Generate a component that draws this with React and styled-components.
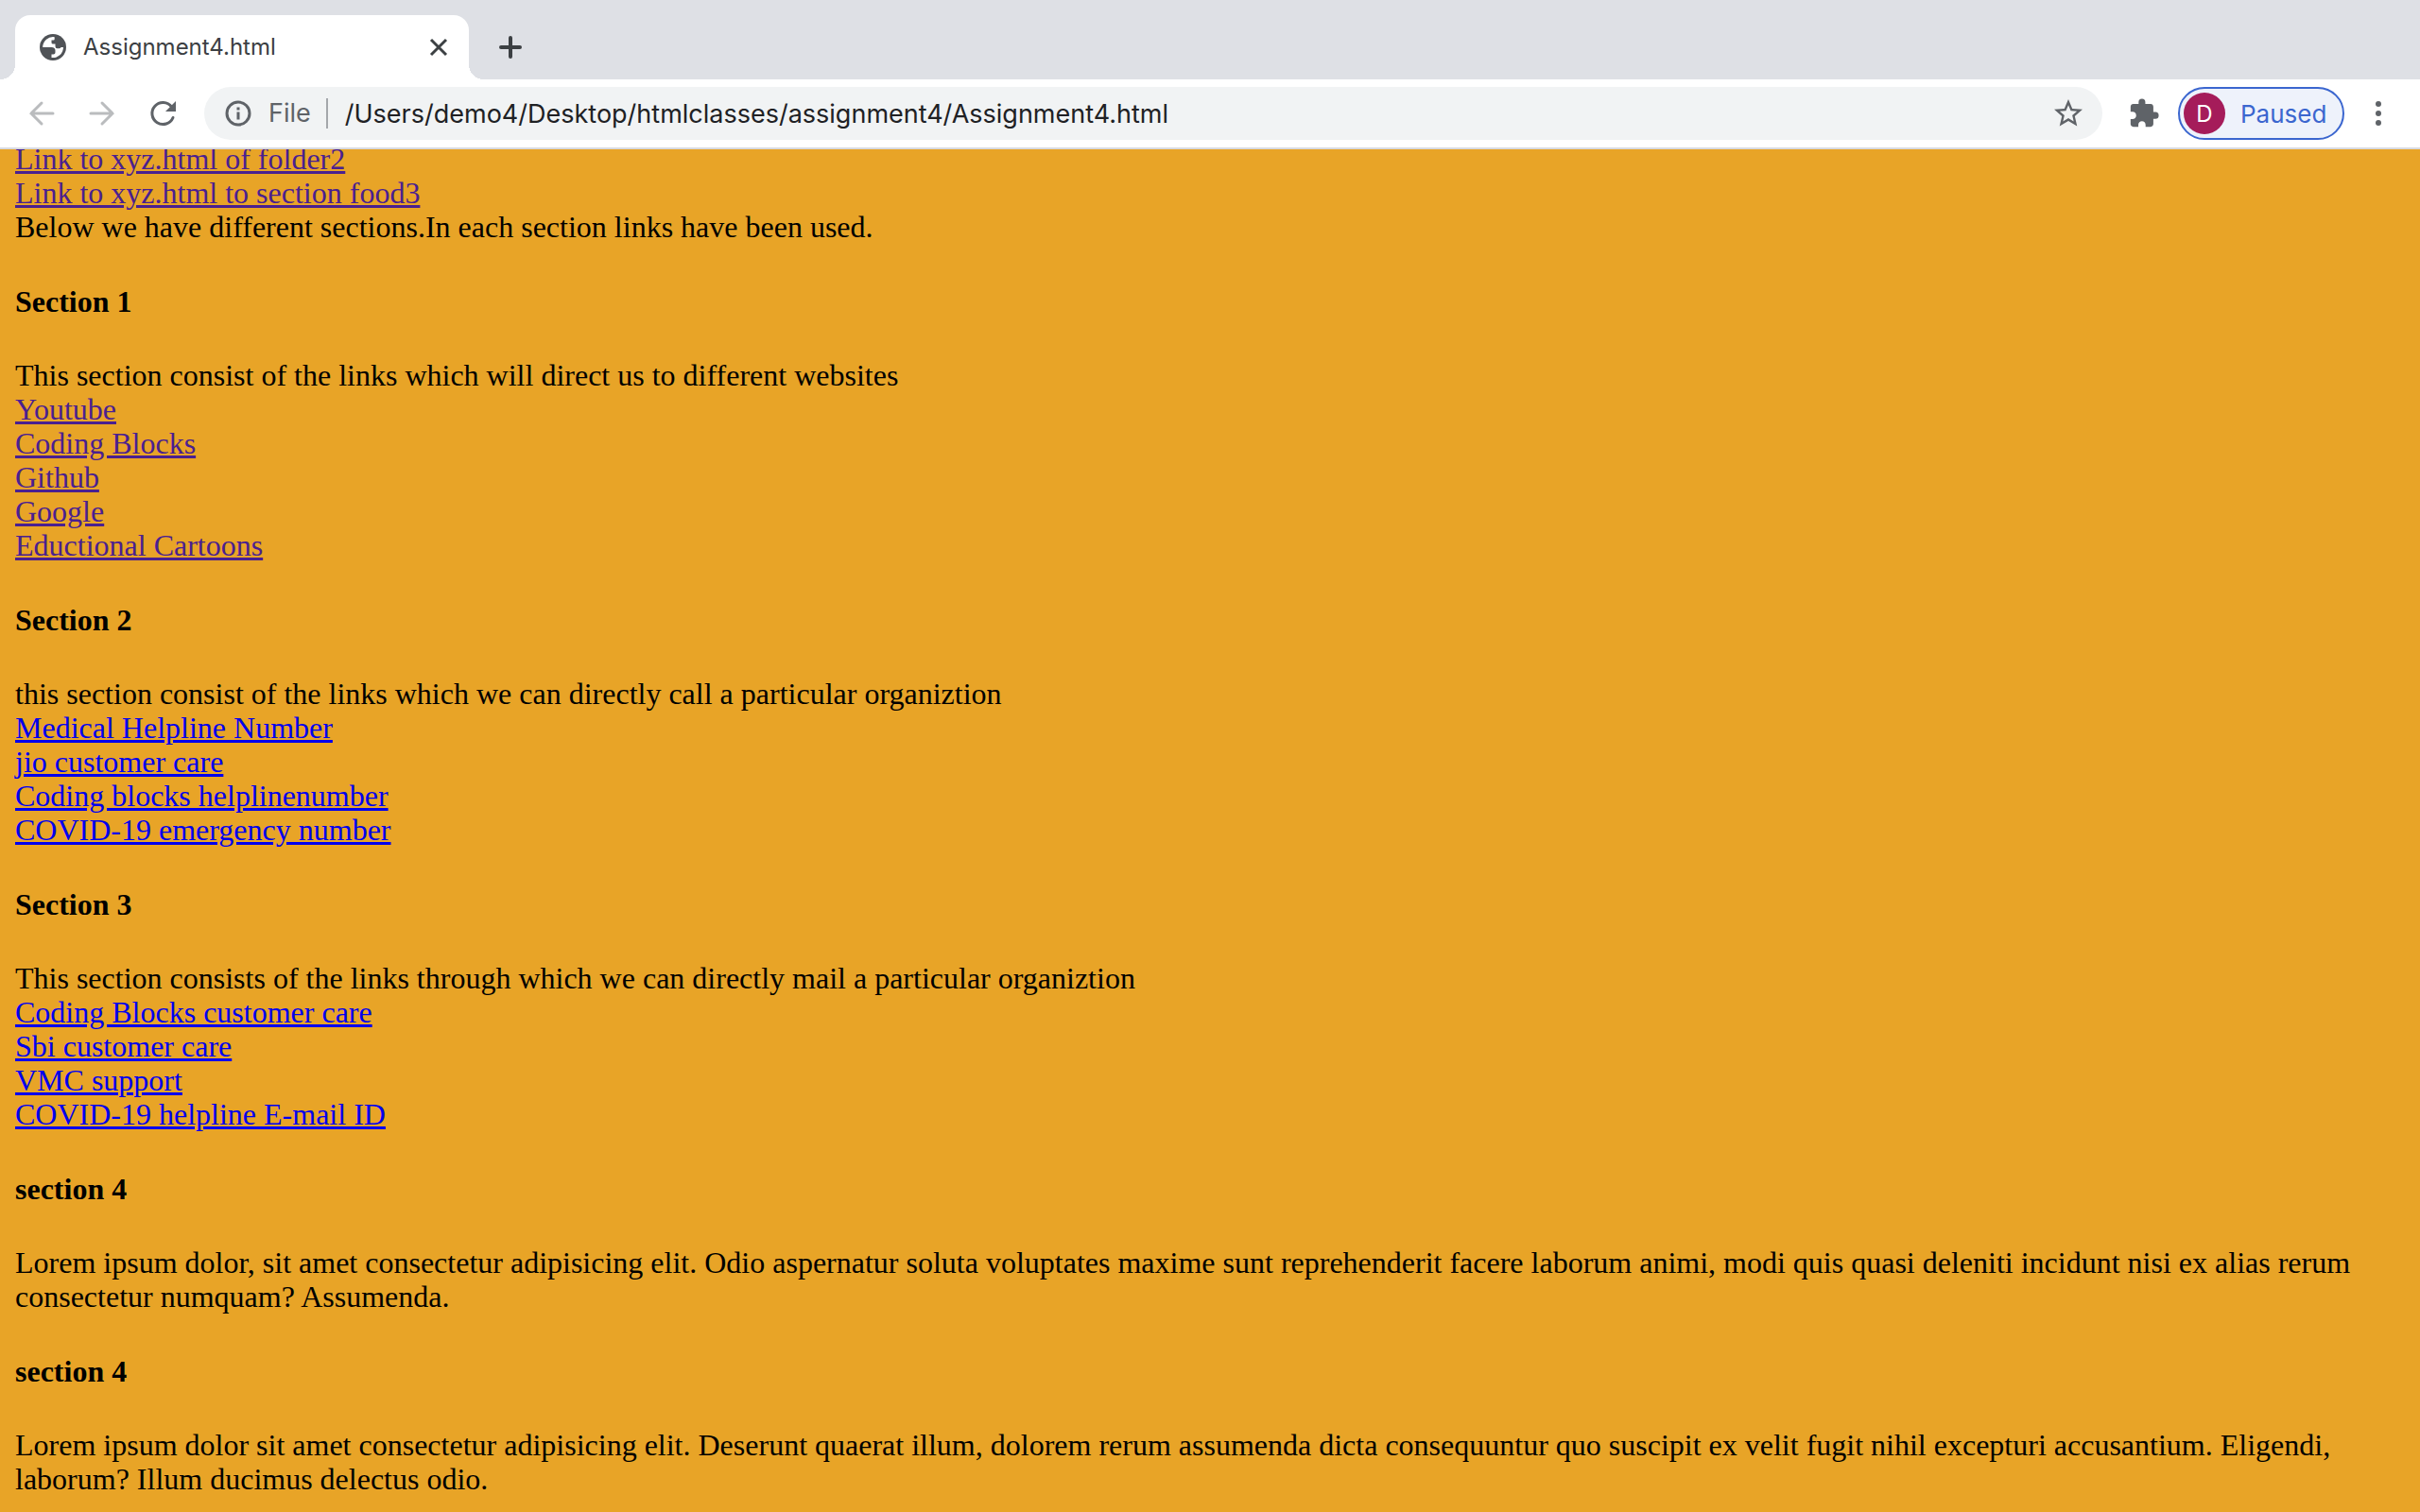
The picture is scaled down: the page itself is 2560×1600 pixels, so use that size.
import React from "react";
import styled, { createGlobalStyle } from "styled-components";
import { MdStarBorder, MdExtension } from "react-icons/md";

const GlobalStyle = createGlobalStyle`
  * { box-sizing: border-box; }
  body { margin: 0; }
`;

const Window = styled.div`
  display: flex;
  flex-direction: column;
  height: 100vh;
  overflow: hidden;
  font-family: Inter, Roboto, "Liberation Sans", sans-serif;
`;

const TabStrip = styled.header`
  display: flex;
  align-items: flex-end;
  gap: 10px;
  padding: 16px 16px 0;
  background: #dee0e5;
`;

const Tab = styled.div`
  position: relative;
  display: flex;
  align-items: center;
  width: 480px;
  height: 68px;
  padding: 0 20px 0 26px;
  border-radius: 16px 16px 0 0;
  background: #ffffff;
  color: #3c4043;

  &::before,
  &::after {
    content: "";
    position: absolute;
    bottom: 0;
    width: 16px;
    height: 16px;
  }
  &::before {
    right: 100%;
    background: radial-gradient(circle at 0 0, transparent 16px, #ffffff 16px);
  }
  &::after {
    left: 100%;
    background: radial-gradient(circle at 100% 0, transparent 16px, #ffffff 16px);
  }
`;

const TabTitle = styled.span`
  flex: 1;
  margin-left: 18px;
  font-size: 24px;
  line-height: 32px;
`;

const IconButton = styled.button`
  display: flex;
  align-items: center;
  justify-content: center;
  flex: none;
  width: ${(p) => p.$size || 64}px;
  height: ${(p) => p.$size || 64}px;
  padding: 0;
  border: 0;
  background: none;
  color: ${(p) => p.$color || "#5f6368"};
`;

const Toolbar = styled.nav`
  display: flex;
  align-items: center;
  height: 74px;
  padding: 0 8px 0 12px;
  border-bottom: 2px solid #d8dae0;
  background: #ffffff;
`;

const AddressBar = styled.div`
  display: flex;
  align-items: center;
  flex: 1;
  height: 56px;
  margin: 0 8px 0 12px;
  padding: 0 4px 0 20px;
  border-radius: 28px;
  background: #f1f3f4;
  color: #5f6368;
  font-size: 27px;
`;

const Scheme = styled.label`
  padding: 0 16px;
  border-right: 2px solid #a4a7ab;
  line-height: 32px;
`;

const Address = styled.input`
  flex: 1;
  min-width: 0;
  padding: 0 0 0 18px;
  border: 0;
  outline: 0;
  background: none;
  color: #202124;
  font: inherit;
`;

const Profile = styled.button`
  display: flex;
  align-items: center;
  gap: 16px;
  width: 176px;
  height: 56px;
  padding: 0 0 0 4px;
  border: 2px solid #3b66cf;
  border-radius: 28px;
  background: #eef2fb;
  color: #3b66cf;
  font-family: inherit;
  font-size: 26px;
`;

const Avatar = styled.span`
  display: flex;
  align-items: center;
  justify-content: center;
  width: 44px;
  height: 44px;
  border-radius: 50%;
  background: #a51c5a;
  color: #ffffff;
  font-size: 24px;
`;

const Viewport = styled.main`
  flex: 1;
  min-height: 0;
  overflow: hidden;
  background: #e8a427;
`;

const Document = styled.article`
  margin-top: -8px;
  padding: 0 16px;
  color: #000000;
  font-family: "Liberation Serif", "Times New Roman", serif;
  font-size: 32px;
  line-height: 36px;
`;

const Heading = styled.h4`
  margin: 43px 0 42px;
  font-size: 32px;
  line-height: 36px;
`;

const Text = styled.p`
  margin: 0;
`;

const Row = styled.div`
  height: 36px;
`;

const Link = styled.a`
  color: ${(p) => (p.$visited ? "#4a2090" : "#0000ee")};
  text-decoration: underline;
`;

const introLinks = ["Link to xyz.html of folder2", "Link to xyz.html to section food3"];

const sections = [
  {
    title: "Section 1",
    text: "This section consist of the links which will direct us to different websites",
    links: ["Youtube", "Coding Blocks", "Github", "Google", "Eductional Cartoons"],
    visited: true,
  },
  {
    title: "Section 2",
    text: "this section consist of the links which we can directly call a particular organiztion",
    links: ["Medical Helpline Number", "jio customer care", "Coding blocks helplinenumber", "COVID-19 emergency number"],
  },
  {
    title: "Section 3",
    text: "This section consists of the links through which we can directly mail a particular organiztion",
    links: ["Coding Blocks customer care", "Sbi customer care", "VMC support", "COVID-19 helpline E-mail ID"],
  },
  {
    title: "section 4",
    text: "Lorem ipsum dolor, sit amet consectetur adipisicing elit. Odio aspernatur soluta voluptates maxime sunt reprehenderit facere laborum animi, modi quis quasi deleniti incidunt nisi ex alias rerum consectetur numquam? Assumenda.",
    links: [],
  },
  {
    title: "section 4",
    text: "Lorem ipsum dolor sit amet consectetur adipisicing elit. Deserunt quaerat illum, dolorem rerum assumenda dicta consequuntur quo suscipit ex velit fugit nihil excepturi accusantium. Eligendi, laborum? Illum ducimus delectus odio.",
    links: [],
  },
];

function Stroke({ size, width = 3, children }) {
  return (
    <svg width={size} height={size} viewBox={`0 0 ${size} ${size}`} fill="none" stroke="currentColor" strokeWidth={width}>
      {children}
    </svg>
  );
}

function Globe() {
  return (
    <svg width="28" height="28" viewBox="0 0 28 28">
      <circle cx="14" cy="14" r="14" fill="#505357" />
      <path
        d="M3.200 14A11 11 0 0 1 15.700 3.200V5.500Q15.700 6.500 14.500 6.500H12.500V9Q12.500 10.500 14 10.500H16.500V13Q16.500 15.200 18.500 15.200H20.500Q22 15.200 22.500 14H25A11 11 0 0 1 12.500 25V21.500H14.500Q16.500 21.500 16.500 19.500V17.500Q16.500 14 12.500 14Z"
        fill="#ffffff"
      />
    </svg>
  );
}

function LinkRows({ items, visited }) {
  return items.map((item) => (
    <Row key={item}>
      <Link href="#" $visited={visited}>{item}</Link>
    </Row>
  ));
}

export default function App() {
  return (
    <Window>
      <GlobalStyle />
      <TabStrip>
        <Tab>
          <Globe />
          <TabTitle>Assignment4.html</TabTitle>
          <IconButton $size={24} $color="#3c4043" aria-label="Close tab">
            <Stroke size={24}><path d="M4 4 20 20M20 4 4 20" /></Stroke>
          </IconButton>
        </Tab>
        <IconButton $size={68} $color="#3c4043" aria-label="New tab">
          <Stroke size={28} width={4}><path d="M14 4V24M4 14H24" strokeLinecap="round" /></Stroke>
        </IconButton>
      </TabStrip>
      <Toolbar>
        <IconButton $color="#babcbe" aria-label="Back">
          <Stroke size={32}><path d="M28 16H5M16 5 5 16 16 27" strokeLinecap="round" /></Stroke>
        </IconButton>
        <IconButton $color="#babcbe" aria-label="Forward">
          <Stroke size={32}><path d="M4 16H27M16 5 27 16 16 27" strokeLinecap="round" /></Stroke>
        </IconButton>
        <IconButton aria-label="Reload">
          <Stroke size={32}>
            <path d="M25.500 9A11.500 11.500 0 1 0 27 20.500" strokeLinecap="round" />
            <path d="M30 3V14H19Z" fill="currentColor" stroke="none" />
          </Stroke>
        </IconButton>
        <AddressBar>
          <Stroke size={32}>
            <circle cx="16" cy="16" r="12" />
            <path d="M16 14.500V22.500M16 9.500V12.500" />
          </Stroke>
          <Scheme htmlFor="address">File</Scheme>
          <Address id="address" defaultValue="/Users/demo4/Desktop/htmlclasses/assignment4/Assignment4.html" />
          <IconButton aria-label="Bookmark">
            <MdStarBorder size={36} />
          </IconButton>
        </AddressBar>
        <IconButton $size={72} aria-label="Extensions">
          <MdExtension size={34} />
        </IconButton>
        <Profile>
          <Avatar>D</Avatar>
          Paused
        </Profile>
        <IconButton $size={72} aria-label="Menu">
          <svg width="32" height="32" viewBox="0 0 32 32" fill="currentColor">
            <circle cx="16" cy="6" r="3" />
            <circle cx="16" cy="16" r="3" />
            <circle cx="16" cy="26" r="3" />
          </svg>
        </IconButton>
      </Toolbar>
      <Viewport>
        <Document>
          <LinkRows items={introLinks} visited />
          <Text>Below we have different sections.In each section links have been used.</Text>
          {sections.map((section, index) => (
            <section key={index}>
              <Heading>{section.title}</Heading>
              <Text>{section.text}</Text>
              <LinkRows items={section.links} visited={section.visited} />
            </section>
          ))}
        </Document>
      </Viewport>
    </Window>
  );
}
